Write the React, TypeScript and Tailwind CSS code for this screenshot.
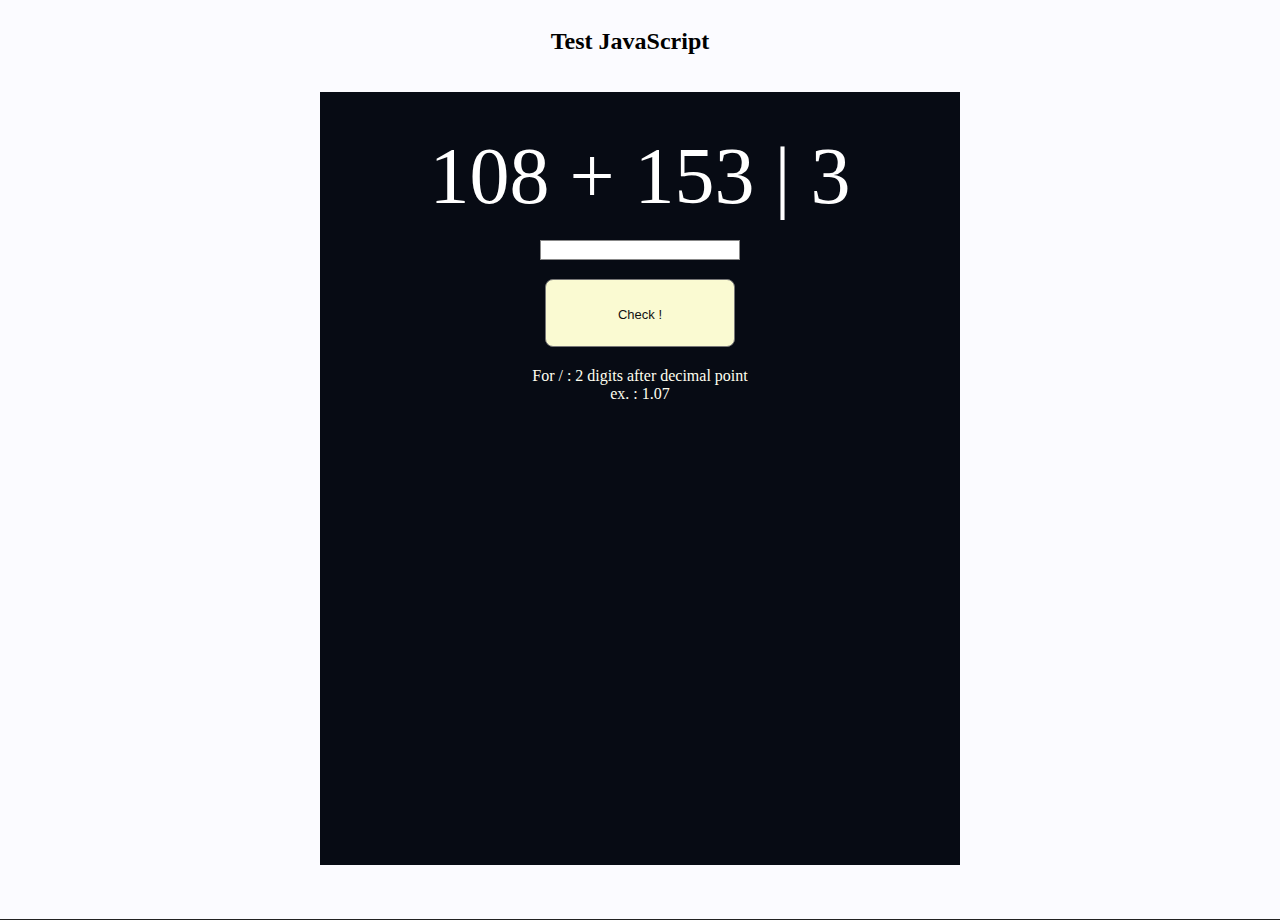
export default function App() {
  return (
    <div className="min-h-[920px] bg-[#fbfbff] border-b border-[#222] box-border flex flex-col items-center" style={{ fontFamily: '"Liberation Serif", serif' }}>
      <h2 className="mt-[26px] mr-[20px] h-[30px] text-[24px] leading-[30px] font-bold text-black">Test JavaScript</h2>
      <div className="mt-[36px] w-[640px] h-[773px] bg-[#070b14] flex flex-col items-center">
        <div className="mt-[36px] h-[96px] text-[80px] leading-[96px] text-white whitespace-pre">108 + 153 | 3</div>
        <input className="mt-[16px] w-[200px] h-[20px] bg-white border border-[#888] outline-none" />
        <button className="mt-[19px] w-[190px] h-[68px] pt-[4px] bg-[#fafad2] border border-[#777] rounded-[8px] text-[13px] text-[#111]" style={{ fontFamily: '"Liberation Sans", sans-serif' }}>Check !</button>
        <div className="mt-[20px] text-[16px] leading-[18px] text-[#fffff0] text-center">
          For / : 2 digits after decimal point<br />ex. : 1.07
        </div>
      </div>
    </div>
  );
}
